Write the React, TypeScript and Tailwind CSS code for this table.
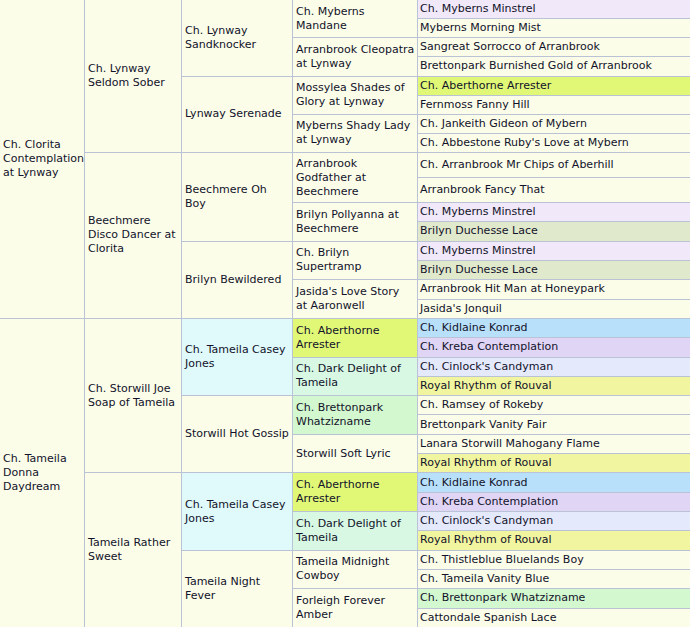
import React from "react";

type N = { t: string[]; bg?: string; k?: N[] };

const BASE = "bg-[#fbfde9]";
const LAV = "bg-[#f1e9f9]";
const YG = "bg-[#e1f877]";
const SAGE = "bg-[#e1e9cd]";
const CYAN = "bg-[#e0fafc]";
const MINT = "bg-[#d8f8e4]";
const GREEN = "bg-[#d3f8cf]";
const BLUE = "bg-[#b9e0fa]";
const PURP = "bg-[#e0d5f5]";
const PERI = "bg-[#e4e9fc]";
const YEL = "bg-[#f1f59f]";

const l = (t: string, bg?: string): N => ({ t: [t], bg });
const n = (t: string[], k: N[], bg?: string): N => ({ t, k, bg });

const data: N[] = [
  n(["Ch. Clorita", "Contemplation", "at Lynway"], [
    n(["Ch. Lynway", "Seldom Sober"], [
      n(["Ch. Lynway", "Sandknocker"], [
        n(["Ch. Myberns", "Mandane"], [l("Ch. Myberns Minstrel", LAV), l("Myberns Morning Mist")]),
        n(["Arranbrook Cleopatra", "at Lynway"], [l("Sangreat Sorrocco of Arranbrook"), l("Brettonpark Burnished Gold of Arranbrook")]),
      ]),
      n(["Lynway Serenade"], [
        n(["Mossylea Shades of", "Glory at Lynway"], [l("Ch. Aberthorne Arrester", YG), l("Fernmoss Fanny Hill")]),
        n(["Myberns Shady Lady", "at Lynway"], [l("Ch. Jankeith Gideon of Mybern"), l("Ch. Abbestone Ruby's Love at Mybern")]),
      ]),
    ]),
    n(["Beechmere", "Disco Dancer at", "Clorita"], [
      n(["Beechmere Oh", "Boy"], [
        n(["Arranbrook", "Godfather at", "Beechmere"], [l("Ch. Arranbrook Mr Chips of Aberhill"), l("Arranbrook Fancy That")]),
        n(["Brilyn Pollyanna at", "Beechmere"], [l("Ch. Myberns Minstrel", LAV), l("Brilyn Duchesse Lace", SAGE)]),
      ]),
      n(["Brilyn Bewildered"], [
        n(["Ch. Brilyn", "Supertramp"], [l("Ch. Myberns Minstrel", LAV), l("Brilyn Duchesse Lace", SAGE)]),
        n(["Jasida's Love Story", "at Aaronwell"], [l("Arranbrook Hit Man at Honeypark"), l("Jasida's Jonquil")]),
      ]),
    ]),
  ]),
  n(["Ch. Tameila", "Donna", "Daydream"], [
    n(["Ch. Storwill Joe", "Soap of Tameila"], [
      n(["Ch. Tameila Casey", "Jones"], [
        n(["Ch. Aberthorne", "Arrester"], [l("Ch. Kidlaine Konrad", BLUE), l("Ch. Kreba Contemplation", PURP)], YG),
        n(["Ch. Dark Delight of", "Tameila"], [l("Ch. Cinlock's Candyman", PERI), l("Royal Rhythm of Rouval", YEL)], MINT),
      ], CYAN),
      n(["Storwill Hot Gossip"], [
        n(["Ch. Brettonpark", "Whatzizname"], [l("Ch. Ramsey of Rokeby"), l("Brettonpark Vanity Fair")], GREEN),
        n(["Storwill Soft Lyric"], [l("Lanara Storwill Mahogany Flame"), l("Royal Rhythm of Rouval", YEL)]),
      ]),
    ]),
    n(["Tameila Rather", "Sweet"], [
      n(["Ch. Tameila Casey", "Jones"], [
        n(["Ch. Aberthorne", "Arrester"], [l("Ch. Kidlaine Konrad", BLUE), l("Ch. Kreba Contemplation", PURP)], YG),
        n(["Ch. Dark Delight of", "Tameila"], [l("Ch. Cinlock's Candyman", PERI), l("Royal Rhythm of Rouval", YEL)], MINT),
      ], CYAN),
      n(["Tameila Night", "Fever"], [
        n(["Tameila Midnight", "Cowboy"], [l("Ch. Thistleblue Bluelands Boy"), l("Ch. Tameila Vanity Blue")]),
        n(["Forleigh Forever", "Amber"], [l("Ch. Brettonpark Whatzizname", GREEN), l("Cattondale Spanish Lace")]),
      ]),
    ]),
  ]),
];

const WIDTHS = ["w-[85px]", "w-[97px]", "w-[111px]", "w-[125px]"];
const H_A = "h-[19.125px]";
const H_B = "h-[25px]";
const H_C = "h-[19.32px]";

let leafCounter = 0;

function Lines({ t }: { t: string[] }) {
  return (
    <div className="whitespace-nowrap">
      {t.map((s, i) => (
        <div key={i}>{s}</div>
      ))}
    </div>
  );
}

function Node({ node, depth }: { node: N; depth: number }) {
  if (!node.k) {
    const idx = leafCounter++;
    const h = idx < 8 ? H_A : idx < 10 ? H_B : H_C;
    return (
      <div className={`${h} ${node.bg ?? BASE} border-b border-[#bac3d5] pl-[2px] flex items-center whitespace-nowrap overflow-hidden`}>
        {node.t[0]}
      </div>
    );
  }
  return (
    <div className="flex">
      <div className={`${WIDTHS[depth]} shrink-0 ${node.bg ?? BASE} border-r border-b border-[#bac3d5] pl-[3px] flex items-center`}>
        <Lines t={node.t} />
      </div>
      <div className="flex flex-col flex-1 min-w-0">
        {node.k.map((c, i) => (
          <Node key={i} node={c} depth={depth + 1} />
        ))}
      </div>
    </div>
  );
}

export default function App() {
  leafCounter = 0;
  return (
    <div className="w-[690px] h-[627px] overflow-hidden bg-[#fbfde9] text-[11px] leading-[14px] text-[#12122a] font-['DejaVu_Sans',Verdana,sans-serif]">
      {data.map((d, i) => (
        <Node key={i} node={d} depth={0} />
      ))}
    </div>
  );
}
